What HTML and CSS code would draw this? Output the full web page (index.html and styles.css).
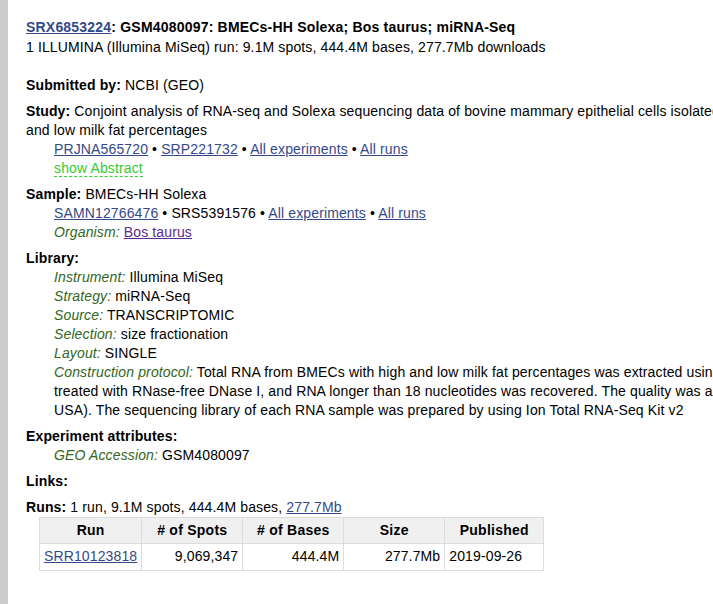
FILE: index.html
```html
<!DOCTYPE html>
<html>
<head>
<meta charset="utf-8">
<link rel="stylesheet" href="styles.css">
</head>
<body>
<div class="page">
  <div class="header">
    <div class="title"><a href="#" class="link">SRX6853224</a>: GSM4080097: BMECs-HH Solexa; Bos taurus; miRNA-Seq</div>
    <div class="sub">1 ILLUMINA (Illumina MiSeq) run: 9.1M spots, 444.4M bases, 277.7Mb downloads</div>
  </div>

  <div class="section"><b>Submitted by:</b> NCBI (GEO)</div>

  <div class="section">
    <div><b>Study:</b> Conjoint analysis of RNA-seq and Solexa sequencing data of bovine mammary epithelial cells isolated from dairy cows with high<br>and low milk fat percentages</div>
    <div class="indent">
      <div><a href="#" class="link">PRJNA565720</a> • <a href="#" class="link">SRP221732</a> • <a href="#" class="link">All experiments</a> • <a href="#" class="link">All runs</a></div>
      <div><span class="toggle">show Abstract</span></div>
    </div>
  </div>

  <div class="section">
    <div><b>Sample:</b> BMECs-HH Solexa</div>
    <div class="indent">
      <div><a href="#" class="link">SAMN12766476</a> • SRS5391576 • <a href="#" class="link">All experiments</a> • <a href="#" class="link">All runs</a></div>
      <div><span class="lbl">Organism:</span> <a href="#" class="visited">Bos taurus</a></div>
    </div>
  </div>

  <div class="section">
    <div><b>Library:</b></div>
    <div class="indent">
      <div><span class="lbl">Instrument:</span> Illumina MiSeq</div>
      <div><span class="lbl">Strategy:</span> miRNA-Seq</div>
      <div><span class="lbl">Source:</span> TRANSCRIPTOMIC</div>
      <div><span class="lbl">Selection:</span> size fractionation</div>
      <div><span class="lbl">Layout:</span> SINGLE</div>
      <div><span class="lbl">Construction protocol:</span> Total RNA from BMECs with high and low milk fat percentages was extracted using TRIzol reagent (Invitrogen, USA), then<br>treated with RNase-free DNase I, and RNA longer than 18 nucleotides was recovered. The quality was assessed using an Agilent 2100 Bioanalyzer (Agilent,<br>USA). The sequencing library of each RNA sample was prepared by using Ion Total RNA-Seq Kit v2</div>
    </div>
  </div>

  <div class="section">
    <div><b>Experiment attributes:</b></div>
    <div class="indent">
      <div><span class="lbl">GEO Accession:</span> GSM4080097</div>
    </div>
  </div>

  <div class="section"><b>Links:</b></div>

  <div class="section">
    <div><b>Runs:</b> 1 run, 9.1M spots, 444.4M bases, <a href="#" class="link">277.7Mb</a></div>
    <table class="runs">
      <thead>
        <tr><th>Run</th><th># of Spots</th><th># of Bases</th><th>Size</th><th class="last">Published</th></tr>
      </thead>
      <tbody>
        <tr><td class="l"><a href="#" class="link">SRR10123818</a></td><td class="r">9,069,347</td><td class="r">444.4M</td><td class="r">277.7Mb</td><td class="l last">2019-09-26</td></tr>
      </tbody>
    </table>
  </div>

  <div class="footer">ID: 9034541</div>
</div>
</body>
</html>
```

FILE: styles.css
```css
html, body {
  margin: 0;
  padding: 0;
  overflow: hidden;
  background: #fff;
}
body {
  font-family: "Liberation Sans", Arial, sans-serif;
  font-size: 14px;
  line-height: 19px;
  letter-spacing: 0.13px;
  color: #000;
}
.page {
  border-left: 8px solid #cccccc;
  padding: 17px 0 0 18px;
  min-height: 604px;
  width: 1200px;
  box-sizing: border-box;
}
.header {
  margin-bottom: 19px;
}
.title {
  font-weight: bold;
  line-height: 20px;
  letter-spacing: 0.2px;
}
.sub {
  line-height: 20px;
}
.section {
  margin-top: 7px;
}
.header + .section {
  margin-top: 0;
}
.indent {
  padding-left: 28px;
}
.link {
  color: #33498a;
  text-decoration: underline;
}
.visited {
  color: #5c2a8c;
  text-decoration: underline;
}
.lbl {
  font-style: italic;
  color: #336622;
}
.toggle {
  color: #33cc33;
  border-bottom: 1px dashed #33cc33;
}
.runs {
  border-collapse: collapse;
  margin-left: 13px;
  letter-spacing: 0;
}
.runs th, .runs td {
  border: 1px solid #dddddd;
  padding: 3px 4px;
  width: 92px;
}
.runs th.last, .runs td.last {
  width: 90px;
}
.runs th {
  background: #f0f0f0;
  font-weight: bold;
  text-align: center;
  letter-spacing: 0.25px;
}
.runs td {
  padding-top: 3px;
  padding-bottom: 4px;
  letter-spacing: 0.13px;
}
.runs td.r {
  text-align: right;
}
.runs td.l {
  text-align: left;
}
.footer {
  margin-top: 30px;
  color: #333;
}
```
